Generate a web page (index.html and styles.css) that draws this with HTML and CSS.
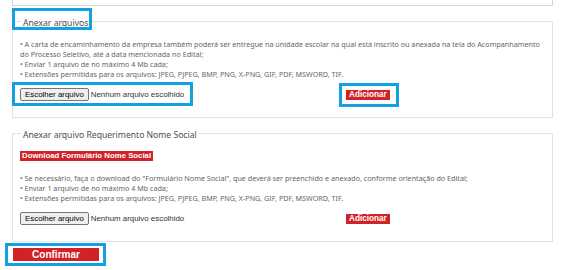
FILE: index.html
```html
<!DOCTYPE html>
<html lang="pt">
<head>
    <meta charset="UTF-8">
    <title>Anexar arquivos</title>
    <link rel="stylesheet" href="styles.css">
</head>
<body>
    <div class="page">
        <div class="prev-box"></div>

        <fieldset class="box">
            <legend>Anexar arquivos</legend>
            <div class="info">
                <p>• A carta de encaminhamento da empresa também poderá ser entregue na unidade escolar na qual está inscrito ou anexada na tela do Acompanhamento do Processo Seletivo, até a data mencionada no Edital;</p>
                <p>• Enviar 1 arquivo de no máximo 4 Mb cada;</p>
                <p>• Extensões permitidas para os arquivos: JPEG, PJPEG, BMP, PNG, X-PNG, GIF, PDF, MSWORD, TIF.</p>
            </div>
            <div class="upload-row">
                <div class="file-cell">
                    <span class="file-btn">Escolher arquivo</span>
                    <span class="file-name">Nenhum arquivo escolhido</span>
                </div>
                <button class="red-btn">Adicionar</button>
            </div>
        </fieldset>

        <fieldset class="box box-social">
            <legend>Anexar arquivo Requerimento Nome Social</legend>
            <div class="download-row">
                <button class="red-btn download-btn">Download Formulário Nome Social</button>
            </div>
            <div class="info">
                <p>• Se necessário, faça o download do "Formulário Nome Social", que deverá ser preenchido e anexado, conforme orientação do Edital;</p>
                <p>• Enviar 1 arquivo de no máximo 4 Mb cada;</p>
                <p>• Extensões permitidas para os arquivos: JPEG, PJPEG, BMP, PNG, X-PNG, GIF, PDF, MSWORD, TIF.</p>
            </div>
            <div class="upload-row">
                <div class="file-cell">
                    <span class="file-btn">Escolher arquivo</span>
                    <span class="file-name">Nenhum arquivo escolhido</span>
                </div>
                <button class="red-btn">Adicionar</button>
            </div>
        </fieldset>

        <div class="confirm-row">
            <button class="red-btn confirm-btn">Confirmar</button>
        </div>

        <!-- marcações em azul sobre a captura -->
        <div class="mark mark-legend"></div>
        <div class="mark mark-file"></div>
        <div class="mark mark-add"></div>
        <div class="mark mark-confirm"></div>
    </div>
</body>
</html>
```

FILE: styles.css
```css
* {
    margin: 0;
    padding: 0;
    box-sizing: border-box;
}

body {
    background: #fff;
    font-family: 'Noto Sans', 'Open Sans', sans-serif;
    color: #555;
}

.page {
    position: relative;
    width: 566px;
    height: 270px;
    overflow: hidden;
}

.prev-box {
    height: 6px;
    margin: 0 13px 0 12px;
    border: 1px solid #d4d4d4;
    border-top: none;
}

.box {
    margin: 9px 13px 0 12px;
    padding: 12px 7px 16px 7px;
    border: 1px solid #e2e2e2;
    min-inline-size: 0;
}

.box legend {
    margin-left: 1px;
    padding: 4px 2px 0;
    height: 12px;
    line-height: 8px;
    font-size: 8.6px;
    color: #4d4d4d;
}

.info {
    font-size: 7.2px;
    line-height: 10px;
    color: #666;
}

.upload-row {
    display: flex;
    align-items: center;
    margin-top: 9px;
}

.file-cell {
    display: flex;
    align-items: center;
    width: 326px;
    font-family: 'Liberation Sans', Arial, sans-serif;
    font-size: 7.9px;
}

.file-btn {
    display: inline-block;
    height: 13px;
    line-height: 11px;
    padding: 0 4px;
    background: #efefef;
    border: 1px solid #767676;
    border-radius: 2px;
    color: #000;
}

.file-name {
    margin-left: 2px;
    color: #333;
}

.red-btn {
    display: inline-block;
    height: 10px;
    line-height: 10px;
    padding: 0 3px;
    background: #d02228;
    border: none;
    color: #fff;
    font-family: 'Liberation Sans', Arial, sans-serif;
    font-weight: bold;
    font-size: 8.2px;
}

.box-social {
    margin-top: 9px;
}

.download-row {
    display: flex;
    margin-bottom: 12px;
}

.download-btn {
    padding: 0 2px;
    font-size: 7.8px;
}

.confirm-row {
    display: flex;
    margin: 6px 0 0 13px;
}

.confirm-btn {
    width: 86px;
    height: 13px;
    line-height: 13px;
    font-size: 10px;
}

.mark {
    position: absolute;
    border: 3px solid #14a0e3;
}

.mark-legend {
    left: 12px;
    top: 8px;
    width: 80px;
    height: 22px;
}

.mark-file {
    left: 12px;
    top: 82px;
    width: 181px;
    height: 24px;
}

.mark-add {
    left: 339px;
    top: 83px;
    width: 60px;
    height: 24px;
}

.mark-confirm {
    left: 5px;
    top: 243px;
    width: 101px;
    height: 23px;
}
```
